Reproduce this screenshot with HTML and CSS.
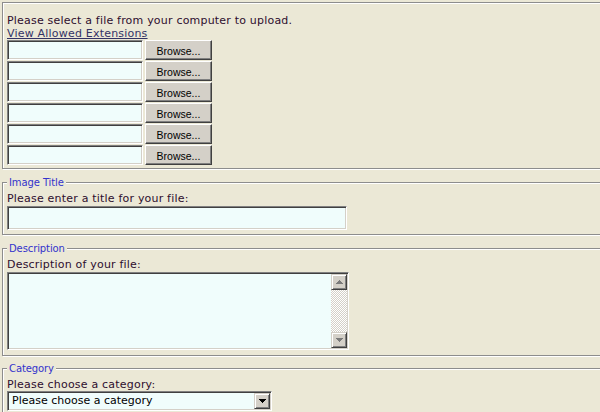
FILE: index.html
```html
<!DOCTYPE html>
<html>
<head>
<meta charset="utf-8">
<title>Upload</title>
<link rel="stylesheet" href="styles.css">
</head>
<body>
<form class="upload">
  <fieldset class="group group-files">
    <div class="line">Please select a file from your computer to upload.</div>
    <a class="line ext-link" href="#">View Allowed Extensions</a>
    <div class="file-rows">
      <div class="file-row"><input class="field file-field" type="text"><button class="browse" type="button">Browse...</button></div>
      <div class="file-row"><input class="field file-field" type="text"><button class="browse" type="button">Browse...</button></div>
      <div class="file-row"><input class="field file-field" type="text"><button class="browse" type="button">Browse...</button></div>
      <div class="file-row"><input class="field file-field" type="text"><button class="browse" type="button">Browse...</button></div>
      <div class="file-row"><input class="field file-field" type="text"><button class="browse" type="button">Browse...</button></div>
      <div class="file-row"><input class="field file-field" type="text"><button class="browse" type="button">Browse...</button></div>
    </div>
  </fieldset>

  <fieldset class="group group-title">
    <legend class="legend">Image Title</legend>
    <label class="line" for="title">Please enter a title for your file:</label>
    <input class="field title-field" id="title" type="text">
  </fieldset>

  <fieldset class="group group-desc">
    <legend class="legend">Description</legend>
    <label class="line" for="desc">Description of your file:</label>
    <div class="inset textbox">
      <textarea id="desc" class="textarea"></textarea>
      <div class="vscroll">
        <span class="sb-btn">
          <svg class="arrow" width="7" height="4" viewBox="0 0 7 4" shape-rendering="crispEdges"><rect x="3" y="0" width="1" height="1"/><rect x="2" y="1" width="3" height="1"/><rect x="1" y="2" width="5" height="1"/><rect x="0" y="3" width="7" height="1"/></svg>
        </span>
        <span class="sb-track"></span>
        <span class="sb-btn">
          <svg class="arrow" width="7" height="4" viewBox="0 0 7 4" shape-rendering="crispEdges"><rect x="0" y="0" width="7" height="1"/><rect x="1" y="1" width="5" height="1"/><rect x="2" y="2" width="3" height="1"/><rect x="3" y="3" width="1" height="1"/></svg>
        </span>
      </div>
    </div>
  </fieldset>

  <fieldset class="group group-cat">
    <legend class="legend">Category</legend>
    <label class="line" for="cat">Please choose a category:</label>
    <div class="inset selectbox">
      <select id="cat" class="select"><option>Please choose a category</option></select>
      <span class="dd-btn">
        <svg class="arrow dark" width="7" height="4" viewBox="0 0 7 4" shape-rendering="crispEdges"><rect x="0" y="0" width="7" height="1"/><rect x="1" y="1" width="5" height="1"/><rect x="2" y="2" width="3" height="1"/><rect x="3" y="3" width="1" height="1"/></svg>
      </span>
    </div>
  </fieldset>
</form>
</body>
</html>
```

FILE: styles.css
```css
html, body {
  margin: 0;
  padding: 0;
  overflow: hidden;
}

body {
  width: 600px;
  height: 412px;
  background: #ebe8d6;
  font-family: "DejaVu Sans", Verdana, sans-serif;
  font-size: 11px;
  line-height: 13px;
  letter-spacing: 0.2px;
  color: #2e0e2e;
}

.upload {
  padding: 2px 0 0 2px;
}

.group {
  margin: 0 -40px 0 0;
  padding: 4px 0 4px 4px;
  min-width: 0;
  border: 1px solid #8d8d8d;
  box-shadow: inset 1px 1px 0 #fff, 1px 1px 0 #fff;
}

.group-files {
  padding-top: 11px;
  padding-bottom: 3px;
}

.group-title {
  margin-top: 8px;
  padding-bottom: 4px;
}

.group-desc {
  margin-top: 8px;
  padding-bottom: 5px;
}

.group-cat {
  margin-top: 7px;
  padding-bottom: 10px;
}

.legend {
  padding: 0 2px;
  font-size: 10px;
  line-height: 11px;
  letter-spacing: -0.1px;
  color: #3333cc;
  background: #ebe8d6;
}

.line {
  display: block;
}

.ext-link {
  color: #333366;
  text-decoration: underline;
}

.file-rows {
  display: flex;
  flex-direction: column;
  gap: 1px;
}

.file-row {
  display: flex;
  gap: 2px;
}

.field {
  box-sizing: border-box;
  margin: 0;
  padding: 0 2px;
  border: 1px solid;
  border-color: #808080 #fff #fff #808080;
  box-shadow: inset 1px 1px 0 #404040, inset -1px -1px 0 #d4d0c8;
  background: #f0fdfc;
  font: inherit;
  outline: none;
}

.file-field {
  width: 136px;
  height: 20px;
}

.browse {
  box-sizing: border-box;
  width: 67px;
  height: 20px;
  margin: 0;
  padding: 1px 0 0;
  border: 1px solid;
  border-color: #fff #404040 #404040 #fff;
  box-shadow: inset -1px -1px 0 #808080, inset 1px 1px 0 #d4d0c8;
  background: #d4d0c8;
  color: #000;
  font-family: "Liberation Sans", Arial, sans-serif;
  font-size: 10.5px;
  line-height: 12px;
  letter-spacing: 0;
}

.title-field {
  display: block;
  width: 340px;
  height: 24px;
  margin-top: 1px;
}

.inset {
  box-sizing: border-box;
  display: flex;
  padding: 1px;
  border: 1px solid;
  border-color: #808080 #fff #fff #808080;
  box-shadow: inset 1px 1px 0 #404040, inset -1px -1px 0 #d4d0c8;
  background: #f0fdfc;
}

.textbox {
  width: 342px;
  height: 78px;
  margin-top: 1px;
}

.textarea {
  flex: 1;
  min-width: 0;
  margin: 0;
  padding: 0;
  border: 0;
  background: #f0fdfc;
  resize: none;
  outline: none;
  font: inherit;
}

.vscroll {
  display: flex;
  flex-direction: column;
  width: 16px;
}

.sb-btn,
.dd-btn {
  box-sizing: border-box;
  display: flex;
  align-items: center;
  justify-content: center;
  width: 16px;
  height: 16px;
  border: 1px solid;
  border-color: #d4d0c8 #404040 #404040 #d4d0c8;
  box-shadow: inset 1px 1px 0 #fff, inset -1px -1px 0 #808080;
  background: #d4d0c8;
}

.sb-track {
  flex: 1;
  background: repeating-conic-gradient(#fff 0 25%, #d4d0c8 0 50%) 0 0 / 2px 2px;
}

.arrow {
  display: block;
  fill: #7a7a7a;
}

.arrow.dark {
  fill: #000;
}

.selectbox {
  width: 265px;
  height: 20px;
}

.select {
  flex: 1;
  min-width: 0;
  height: 16px;
  margin: 0;
  padding: 0 0 0 3px;
  border: 0;
  background: transparent;
  color: #000;
  font: inherit;
  line-height: 16px;
  appearance: none;
  -webkit-appearance: none;
  outline: none;
}
```
